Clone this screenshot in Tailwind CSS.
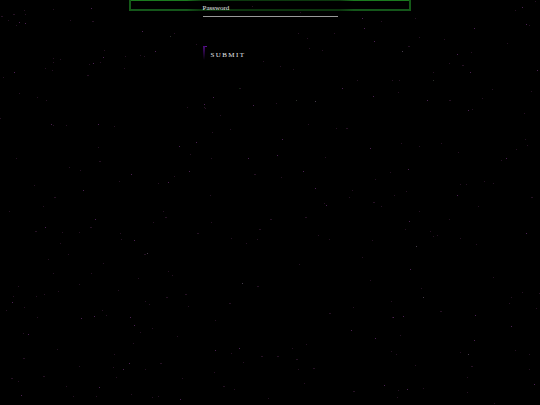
<!DOCTYPE html>
<html lang="en">
<head>
  <meta charset="UTF-8">
  <meta name="viewport" content="width=device-width, initial-scale=1.0">
  <title>Login</title>
  <script src="https://cdn.jsdelivr.net/npm/@tailwindcss/browser@4"></script>
</head>
<body class="relative min-h-screen overflow-hidden bg-black font-['Liberation_Serif',serif] text-[7px] leading-[8px] text-gray-200">
  <!-- starfield -->
  <svg class="absolute left-0 top-0" width="540" height="405" viewBox="0 0 540 405" fill="none" aria-hidden="true">
    <path stroke="#6b2f75" stroke-opacity=".7" d="M91 8.5h1M25 23.5h1M19 22.5h1M14 72.5h1M51 124.5h1M98 124.5h1M93 63.5h1M103 57.5h1M142 31.5h1M155 51.5h1M253 105.5h1M315 101.5h1M362 18.5h1M364 28.5h1M374 41.5h1M402 51.5h1M457 54.5h1M470 72.5h1M373 96.5h1M427 100.5h1M468 110.5h1M474 28.5h1M526 24.5h1M537 70.5h1M522 7.5h1M204 104.5h1M213 97.5h1M342 88.5h1M189 171.5h1M168 182.5h1M131 174.5h1M179 146.5h1M196 142.5h1M248 158.5h1M83 190.5h1M45 227.5h1M95 219.5h1M134 240.5h1M147 253.5h1M370 148.5h1M408 169.5h1M315 188.5h1M326 205.5h1M457 195.5h1M409 221.5h1M416 246.5h1M526 233.5h1M506 158.5h1M303 171.5h1M277 155.5h1M282 139.5h1M410 269.5h1M94 316.5h1M130 317.5h1M134 325.5h1M12 302.5h1M28 334.5h1M242 283.5h1M215 350.5h1M239 348.5h1M123 369.5h1M129 363.5h1M180 399.5h1M99 387.5h1M21 395.5h1M403 316.5h1M351 330.5h1M375 338.5h1M423 297.5h1M474 340.5h1M468 354.5h1M407 389.5h1M511 326.5h1M475 315.5h1M534 384.5h1M393 317.5h1M384 385.5h1M81 318.5h1"/>
    <path stroke="#54264f" stroke-opacity=".45" d="M24 10.5h1M25 14.5h1M1 16.5h2M13 14.5h2M8 20.5h1M16 25.5h1M53 9.5h1M70 20.5h1M92 21.5h2M53 58.5h1M53 62.5h1M60 59.5h1M45 68.5h1M52 70.5h1M100 62.5h1M87 75.5h2M3 77.5h1M19 93.5h1M37 97.5h1M46 100.5h1M0 118.5h1M53 125.5h1M66 125.5h1M114 126.5h1M140 55.5h1M144 56.5h1M125 56.5h1M124 68.5h1M170 36.5h1M174 33.5h1M104 50.5h1M89 64.5h1M196 44.5h1M212 8.5h1M252 6.5h1M300 12.5h1M298 33.5h1M307 38.5h1M334 33.5h1M309 48.5h1M322 50.5h1M263 61.5h1M280 66.5h1M293 69.5h1M240 88.5h1M276 103.5h1M296 100.5h1M204 107.5h1M205 108.5h1M187 107.5h1M220 115.5h1M230 129.5h1M308 124.5h1M336 128.5h1M346 128.5h2M212 132.5h1M357 80.5h1M381 21.5h1M408 46.5h2M415 18.5h1M419 37.5h1M444 39.5h1M471 52.5h1M462 65.5h2M449 63.5h1M433 72.5h1M433 80.5h1M399 80.5h1M392 80.5h1M398 92.5h1M449 100.5h2M492 89.5h1M482 98.5h1M531 91.5h1M472 109.5h1M524 113.5h1M507 43.5h1M529 25.5h1M515 10.5h1M535 1.5h1M16 158.5h1M69 167.5h1M80 170.5h1M99 161.5h2M98 147.5h1M34 185.5h1M54 197.5h2M43 206.5h1M119 181.5h1M158 183.5h1M174 176.5h1M190 154.5h1M211 158.5h1M254 174.5h2M210 195.5h1M163 211.5h1M165 217.5h2M153 222.5h1M211 222.5h1M197 233.5h2M246 243.5h1M259 229.5h2M257 239.5h1M231 238.5h1M90 227.5h2M79 232.5h1M62 232.5h1M35 231.5h2M60 243.5h1M68 254.5h1M48 259.5h1M103 263.5h1M120 233.5h1M121 239.5h1M144 254.5h2M9 211.5h1M401 143.5h1M441 143.5h1M458 152.5h1M501 160.5h1M516 149.5h1M527 145.5h1M525 139.5h1M466 184.5h1M460 184.5h1M484 181.5h1M493 183.5h1M531 197.5h2M478 206.5h1M449 219.5h1M437 235.5h1M460 238.5h1M476 244.5h1M433 236.5h1M430 231.5h1M405 229.5h1M419 211.5h1M406 191.5h1M394 195.5h1M375 179.5h1M390 172.5h1M352 190.5h1M349 197.5h1M373 202.5h2M381 206.5h1M324 203.5h1M305 217.5h2M270 219.5h2M318 235.5h1M329 239.5h1M372 240.5h1M362 257.5h1M299 264.5h1M419 146.5h1M325 157.5h1M281 177.5h1M53 273.5h1M91 273.5h1M79 284.5h1M58 291.5h1M18 286.5h1M13 296.5h1M36 296.5h1M44 294.5h1M24 307.5h1M6 310.5h1M37 317.5h1M23 333.5h1M23 358.5h2M18 381.5h1M57 349.5h1M79 366.5h1M43 376.5h2M11 378.5h2M66 386.5h1M73 396.5h1M96 396.5h1M116 377.5h1M113 367.5h1M145 369.5h1M160 363.5h2M131 394.5h1M152 397.5h1M158 396.5h1M182 378.5h1M114 354.5h1M133 343.5h1M140 332.5h1M152 328.5h1M149 304.5h1M145 301.5h1M166 297.5h2M185 294.5h2M188 306.5h1M177 336.5h1M172 275.5h1M168 271.5h1M138 278.5h1M118 290.5h1M102 310.5h1M106 315.5h1M229 303.5h2M215 320.5h1M257 286.5h2M231 353.5h1M243 362.5h1M261 356.5h2M214 372.5h1M223 386.5h2M234 389.5h1M268 398.5h1M370 280.5h1M391 301.5h1M353 307.5h1M329 313.5h2M392 317.5h1M440 311.5h2M421 288.5h1M493 277.5h1M511 297.5h1M522 292.5h1M509 303.5h1M539 293.5h1M536 308.5h1M292 348.5h1M306 344.5h1M277 356.5h2M296 359.5h2M298 369.5h1M313 368.5h2M304 383.5h1M353 391.5h2M398 390.5h1M423 388.5h1M397 397.5h1M415 365.5h1M391 351.5h1M396 354.5h1M460 352.5h1M471 366.5h2M467 377.5h1M467 392.5h1M494 403.5h1M515 350.5h1M529 354.5h1M529 369.5h1M400 335.5h1"/>
    <path stroke="#3d7a3d" stroke-opacity=".3" d="M170 36.5h1M239 88.5h1M296 100.5h1M315 101.5h1M402 51.5h1M433 80.5h1M147 253.5h1M416 246.5h1M242 283.5h1M423 297.5h1M468 354.5h1"/>
  </svg>

  <main class="relative mx-auto h-[11px] w-full max-w-[282px] border-x-2 border-[#145a18]">
    <!-- frame, brighter towards the corners -->
    <span class="absolute inset-x-0 top-0 h-px bg-linear-to-r from-[#1a7a1e] from-20% via-[#0c380e] via-25% to-[#0c380e]"></span>
    <span class="absolute right-0 top-0 h-px w-1/4 bg-linear-to-l from-[#1a7a1e] from-80% to-[#0c380e]"></span>
    <span class="absolute inset-x-0 bottom-0 h-[2px] bg-linear-to-r from-[#14561a] from-20% via-[#0b340d] via-25% to-[#0b340d]"></span>
    <span class="absolute bottom-0 right-0 h-[2px] w-1/4 bg-linear-to-l from-[#14561a] from-80% to-[#0b340d]"></span>
    <form class="relative mx-auto w-[135px]">
      <div class="relative">
        <input id="password" type="password" class="block h-[17px] w-full border-b border-[#999] bg-transparent outline-none">
        <label for="password" class="absolute left-0 top-1">Password</label>
      </div>
      <button type="submit" class="relative mt-[29px] block px-2 pb-1 pt-[5px] uppercase tracking-[0.2em]">
        <span class="absolute left-0 top-0 h-px w-1 bg-[#5b1090]"></span>
        <span class="absolute left-0 top-0 h-[14px] w-[2px] bg-linear-to-b from-[#4a0d78] to-transparent"></span>
        Submit
      </button>
    </form>
  </main>
</body>
</html>
